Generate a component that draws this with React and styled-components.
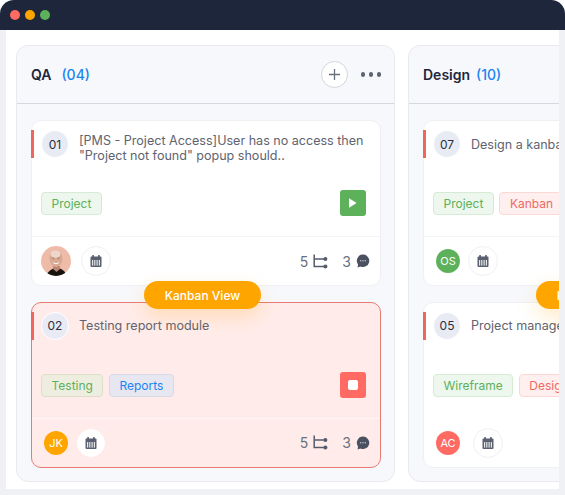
import React from 'react';
import styled, { createGlobalStyle } from 'styled-components';

const GlobalStyle = createGlobalStyle`
  * { box-sizing: border-box; }
  html, body { margin: 0; padding: 0; background: #ffffff; }
  body { font-family: "Inter", "Liberation Sans", sans-serif; }
`;

const columns = [
  {
    title: 'QA',
    count: '(04)',
    countGap: 10,
    actions: true,
    cards: [
      {
        id: '01',
        text: '[PMS - Project Access]User has no access then "Project not found" popup should..',
        wrapped: true,
        tags: [{ label: 'Project', tone: 'green' }],
        status: 'play',
        avatar: { photo: true },
        gap: 10,
      },
      {
        id: '02',
        text: 'Testing report module',
        tags: [
          { label: 'Testing', tone: 'greenOnPink' },
          { label: 'Reports', tone: 'blueOnPink' },
        ],
        status: 'stop',
        active: true,
        avatar: { initials: 'JK', color: '#ffa500' },
        gap: 6,
      },
    ],
  },
  {
    title: 'Design',
    count: '(10)',
    countGap: 6,
    cards: [
      {
        id: '07',
        text: 'Design a kanban board for project',
        tags: [
          { label: 'Project', tone: 'green' },
          { label: 'Kanban', tone: 'red' },
        ],
        avatar: { initials: 'OS', color: '#5cb15a' },
        gap: 5,
      },
      {
        id: '05',
        text: 'Project management dashboard',
        tags: [
          { label: 'Wireframe', tone: 'green' },
          { label: 'Design', tone: 'red' },
        ],
        avatar: { initials: 'AC', color: '#ff6b63' },
        gap: 10,
        noDivider: true,
      },
    ],
  },
];

const tagTones = {
  green: { bg: '#edf7ed', border: '#d5ebd5', color: '#5cb15a' },
  greenOnPink: { bg: '#eeeee0', border: '#dcdfca', color: '#5cb15a' },
  blueOnPink: { bg: '#e6e7f1', border: '#d7d9e6', color: '#1a84f0' },
  red: { bg: '#fff0ef', border: '#fbd8d6', color: '#ee6a64' },
};

const CalendarIcon = () => (
  <svg width="14" height="14" viewBox="0 0 14 14">
    <rect x="1.500" y="2.500" width="11" height="10.500" rx="1" fill="#5a6070" />
    <rect x="3.200" y="1" width="1.800" height="3" rx="0.600" fill="#5a6070" />
    <rect x="9" y="1" width="1.800" height="3" rx="0.600" fill="#5a6070" />
    <rect x="3" y="6" width="1.200" height="5.600" fill="#ffffff" opacity="0.85" />
    <rect x="5.200" y="6" width="1.200" height="5.600" fill="#ffffff" opacity="0.85" />
    <rect x="7.500" y="6" width="1.200" height="5.600" fill="#ffffff" opacity="0.85" />
    <rect x="9.800" y="6" width="1.200" height="5.600" fill="#ffffff" opacity="0.85" />
  </svg>
);

const BranchIcon = () => (
  <svg width="15" height="15" viewBox="0 0 15 15" fill="none">
    <path d="M1.200 0.500V12.500H12" stroke="#555b6b" strokeWidth="1.500" />
    <path d="M1.200 5H12" stroke="#555b6b" strokeWidth="1.500" />
    <circle cx="12.400" cy="5" r="2" fill="#555b6b" />
    <circle cx="12.400" cy="12.500" r="2" fill="#555b6b" />
  </svg>
);

const CommentIcon = () => (
  <svg width="14" height="14" viewBox="0 0 14 14">
    <path d="M7 .6a6.200 6.200 0 1 1-2.600 11.800L1.600 13.400 2 10.400A6.200 6.200 0 0 1 7 .6Z" fill="#4b5161" />
    <circle cx="4.700" cy="6.800" r=".7" fill="#c9ccd4" />
    <circle cx="7" cy="6.800" r=".7" fill="#c9ccd4" />
    <circle cx="9.300" cy="6.800" r=".7" fill="#c9ccd4" />
  </svg>
);

const PlayIcon = () => (
  <svg width="10" height="12" viewBox="0 0 10 12">
    <path d="M1 1.200 8.600 6 1 10.800Z" fill="#ffffff" />
  </svg>
);

const PhotoAvatar = () => (
  <svg width="30" height="30" viewBox="0 0 30 30">
    <defs>
      <clipPath id="photo-clip">
        <circle cx="15" cy="15" r="15" />
      </clipPath>
    </defs>
    <g clipPath="url(#photo-clip)">
      <rect width="30" height="30" fill="#eebba8" />
      <path d="M5 30c2-5 6-7.500 10-8 5 0 9 2.500 11 8Z" fill="#17130f" />
      <path d="M12.500 20h6l1 2.500-4 3.500-4-3.500Z" fill="#b98570" />
      <ellipse cx="15" cy="12.500" rx="6.400" ry="8.400" fill="#d8a992" />
      <ellipse cx="14.500" cy="8" rx="5" ry="3.800" fill="#efd6ca" />
      <rect x="11.400" y="11.800" width="1.700" height=".7" fill="#7a5a4c" />
      <rect x="16.600" y="11.800" width="1.700" height=".7" fill="#7a5a4c" />
      <path d="M11.500 15.500c2 2 5 2 7 0-.8 3.600-6.200 3.600-7 0Z" fill="#fff6f2" />
    </g>
  </svg>
);

const Column = ({ column }) => (
  <ColumnBox>
    <ColumnHeader>
      <ColumnTitle>{column.title}</ColumnTitle>
      <ColumnCount $gap={column.countGap}>{column.count}</ColumnCount>
      {column.actions && (
        <HeaderActions>
          <AddButton>
            <svg width="11" height="11" viewBox="0 0 11 11" fill="none">
              <path d="M5.500 0v11M0 5.500h11" stroke="#6a6f7c" strokeWidth="1.300" />
            </svg>
          </AddButton>
          <MoreDots>
            <Dot />
            <Dot />
            <Dot />
          </MoreDots>
        </HeaderActions>
      )}
    </ColumnHeader>
    <CardList>
      {column.cards.map((card) => (
        <Card key={card.id} card={card} />
      ))}
      <KanbanPill>Kanban View</KanbanPill>
    </CardList>
  </ColumnBox>
);

const Card = ({ card }) => (
  <CardBox $active={card.active}>
    <Marker />
    <CardTop>
      <NumberBadge>{card.id}</NumberBadge>
      <CardText $wrapped={card.wrapped}>{card.text}</CardText>
    </CardTop>
    <TagRow>
      <Tags>
        {card.tags.map((tag) => (
          <Tag key={tag.label} $tone={tag.tone}>{tag.label}</Tag>
        ))}
      </Tags>
      {card.status && (
        <StatusButton $status={card.status}>
          {card.status === 'play' ? <PlayIcon /> : <StopSquare />}
        </StatusButton>
      )}
    </TagRow>
    <CardFooter $active={card.active} $noDivider={card.noDivider}>
      <People $gap={card.gap}>
        <AvatarSlot>
          {card.avatar.photo ? (
            <PhotoAvatar />
          ) : (
            <Initials $color={card.avatar.color}>{card.avatar.initials}</Initials>
          )}
        </AvatarSlot>
        <CalendarButton $active={card.active}>
          <CalendarIcon />
        </CalendarButton>
      </People>
      <Counts>
        <Count>5</Count>
        <BranchIcon />
        <CommentCount>3</CommentCount>
        <CommentIcon />
      </Counts>
    </CardFooter>
  </CardBox>
);

const App = () => (
  <Page>
    <GlobalStyle />
    <TitleBar>
      <WindowDot $color="#ff6b63" />
      <WindowDot $color="#ffa500" />
      <WindowDot $color="#5cb15a" />
    </TitleBar>
    <Gutter>
      <Board>
        {columns.map((column) => (
          <Column key={column.title} column={column} />
        ))}
      </Board>
    </Gutter>
  </Page>
);

const Page = styled.div`
  width: 565px;
  height: 495px;
  display: flex;
  flex-direction: column;
  overflow: hidden;
  background: #ffffff;
`;

const TitleBar = styled.div`
  height: 30px;
  flex: none;
  display: flex;
  align-items: center;
  gap: 5px;
  padding-left: 10px;
  background: #1e263b;
  border-radius: 14px 14px 0 0;
`;

const WindowDot = styled.span`
  width: 10px;
  height: 10px;
  border-radius: 50%;
  background: ${(p) => p.$color};
`;

const Gutter = styled.div`
  flex: 1;
  min-height: 0;
  display: flex;
  padding: 0 6px 6px;
  background: #eff1f4;
`;

const Board = styled.div`
  flex: 1;
  min-width: 0;
  display: flex;
  gap: 13px;
  padding: 15px 0 7px 10px;
  background: #ffffff;
  overflow: hidden;
`;

const ColumnBox = styled.section`
  width: 379px;
  flex: none;
  display: flex;
  flex-direction: column;
  background: #f7f8fc;
  border: 1px solid #e8eaef;
  border-radius: 12px;
`;

const ColumnHeader = styled.header`
  height: 58px;
  flex: none;
  display: flex;
  align-items: center;
  padding: 0 13px 0 14px;
  border-bottom: 1px solid #d6d8e0;
`;

const ColumnTitle = styled.h2`
  margin: 0;
  font-size: 14px;
  font-weight: 600;
  color: #1e263b;
`;

const ColumnCount = styled.span`
  margin-left: ${(p) => p.$gap}px;
  font-size: 14px;
  font-weight: 500;
  color: #1a84f0;
`;

const HeaderActions = styled.div`
  margin-left: auto;
  display: flex;
  align-items: center;
  gap: 13px;
`;

const AddButton = styled.button`
  width: 27px;
  height: 27px;
  padding: 0;
  display: flex;
  align-items: center;
  justify-content: center;
  background: #ffffff;
  border: 1px solid #d3d5dc;
  border-radius: 50%;
`;

const MoreDots = styled.div`
  display: flex;
  gap: 3.500px;
`;

const Dot = styled.span`
  width: 4.300px;
  height: 4.300px;
  border-radius: 50%;
  background: #5f6472;
`;

const CardList = styled.div`
  position: relative;
  display: flex;
  flex-direction: column;
  gap: 15.500px;
  padding: 16px 13px 13.500px 14px;
`;

const CardBox = styled.article`
  position: relative;
  height: 166px;
  display: flex;
  flex-direction: column;
  background: ${(p) => (p.$active ? '#ffecea' : '#ffffff')};
  border: 1px solid ${(p) => (p.$active ? '#e87a74' : '#eff0f4')};
  border-radius: 10px;
`;

const Marker = styled.span`
  position: absolute;
  left: -1px;
  top: 9px;
  width: 3px;
  height: 28px;
  background: #f0665f;
`;

const CardTop = styled.div`
  height: 46px;
  margin-bottom: 17px;
  flex: none;
  display: flex;
  align-items: center;
  gap: 10px;
  padding: 0 14px 0 9px;
`;

const NumberBadge = styled.span`
  width: 28px;
  height: 28px;
  flex: none;
  display: flex;
  align-items: center;
  justify-content: center;
  font-size: 12px;
  font-weight: 400;
  color: #2a3040;
  background: #e9ebf4;
  border: 1px solid #ffffff;
  border-radius: 50%;
`;

const CardText = styled.p`
  margin: ${(p) => (p.$wrapped ? '7px' : '0')} 0 0;
  width: 300px;
  flex: none;
  font-size: 12.550px;
  line-height: 15px;
  color: #60636f;
`;

const TagRow = styled.div`
  height: 52px;
  flex: none;
  display: flex;
  align-items: flex-start;
  justify-content: space-between;
  padding: 8px 14px 0 9px;
`;

const Tags = styled.div`
  display: flex;
  gap: 5.500px;
`;

const Tag = styled.span`
  height: 23px;
  display: flex;
  align-items: center;
  padding: 0 9.500px;
  font-size: 12px;
  white-space: nowrap;
  color: ${(p) => tagTones[p.$tone].color};
  background: ${(p) => tagTones[p.$tone].bg};
  border: 1px solid ${(p) => tagTones[p.$tone].border};
  border-radius: 4px;
`;

const StatusButton = styled.button`
  width: 26px;
  height: 26px;
  margin-top: -2px;
  padding: 0;
  display: flex;
  align-items: center;
  justify-content: center;
  border: 0;
  border-radius: 3px;
  background: ${(p) => (p.$status === 'play' ? '#5cb15a' : '#ff6b63')};
`;

const StopSquare = styled.span`
  width: 10px;
  height: 10px;
  border-radius: 2px;
  background: #ffffff;
`;

const CardFooter = styled.footer`
  flex: 1;
  display: flex;
  align-items: center;
  justify-content: space-between;
  padding: 0 10px 0 9px;
  border-top: 1px solid
    ${(p) => (p.$noDivider ? 'transparent' : p.$active ? '#fff5f3' : '#f3f4f6')};
`;

const People = styled.div`
  display: flex;
  align-items: center;
  gap: ${(p) => p.$gap}px;
`;

const AvatarSlot = styled.div`
  width: 30px;
  height: 30px;
  display: flex;
  align-items: center;
  justify-content: center;
`;

const Initials = styled.span`
  width: 24px;
  height: 24px;
  display: flex;
  align-items: center;
  justify-content: center;
  font-size: 11px;
  font-weight: 400;
  color: #ffffff;
  background: ${(p) => p.$color};
  border-radius: 50%;
`;

const CalendarButton = styled.div`
  width: ${(p) => (p.$active ? 28 : 30)}px;
  height: ${(p) => (p.$active ? 28 : 30)}px;
  display: flex;
  align-items: center;
  justify-content: center;
  background: #ffffff;
  border: 1px solid ${(p) => (p.$active ? '#ffffff' : '#eff0f3')};
  border-radius: 50%;
`;

const Counts = styled.div`
  display: flex;
  align-items: center;
  font-size: 14px;
  color: #6b7080;
`;

const Count = styled.span`
  margin-right: 5px;
`;

const CommentCount = styled.span`
  margin: 0 5px 0 14px;
`;

const KanbanPill = styled.div`
  position: absolute;
  left: 127px;
  top: 177px;
  width: 117px;
  height: 28px;
  display: flex;
  align-items: center;
  justify-content: center;
  font-size: 12px;
  font-weight: 500;
  white-space: nowrap;
  color: #ffffff;
  background: #ffa500;
  border-radius: 14px;
  box-shadow: 0 8px 20px rgba(255, 165, 0, 0.22);
`;

export default App;
